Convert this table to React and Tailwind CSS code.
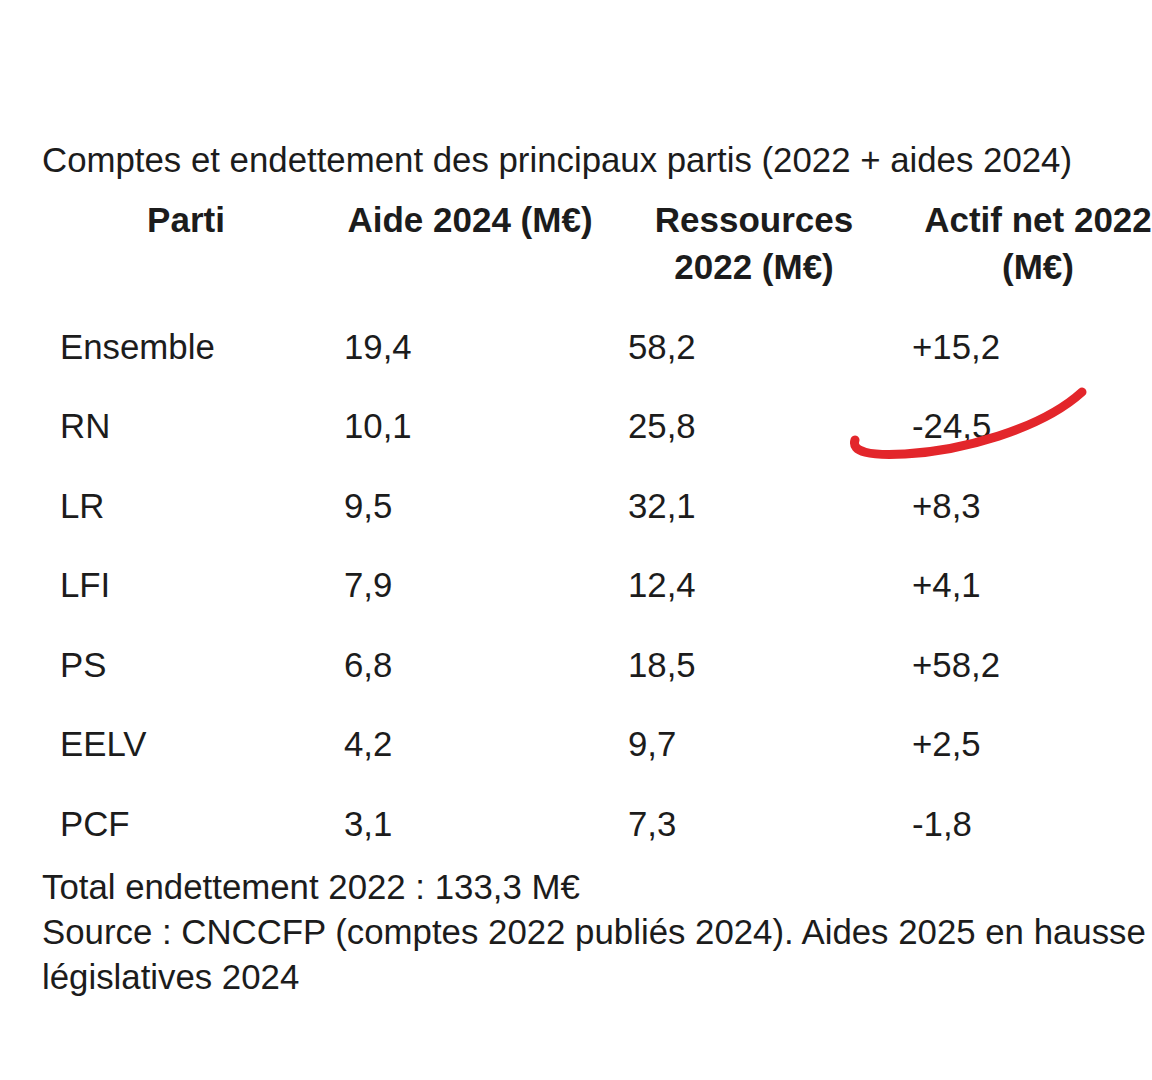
import React from 'react'

const ROWS = [
  ['Ensemble', '19,4', '58,2', '+15,2'],
  ['RN', '10,1', '25,8', '-24,5'],
  ['LR', '9,5', '32,1', '+8,3'],
  ['LFI', '7,9', '12,4', '+4,1'],
  ['PS', '6,8', '18,5', '+58,2'],
  ['EELV', '4,2', '9,7', '+2,5'],
  ['PCF', '3,1', '7,3', '-1,8'],
]

const COLS = 'grid grid-cols-[284px_284px_284px_284px]'

export default function App() {
  return (
    <div className="relative w-[1152px] h-[1080px] overflow-hidden bg-white text-[#1c1c1c] font-['Liberation_Sans',Arial,sans-serif]">
      <div className="w-[1400px] pl-[42px] pt-[140px]">
        <h1 className="text-[34.8px] leading-[40px] font-normal">
          Comptes et endettement des principaux partis (2022 + aides 2024)
        </h1>

        {/* header */}
        <div className={`${COLS} ml-[2px] mt-[16px] text-[35px] leading-[47px] font-bold text-center`}>
          <div>Parti</div>
          <div>Aide 2024 (M€)</div>
          <div>Ressources<br />2022 (M€)</div>
          <div>Actif net 2022<br />(M€)</div>
        </div>

        {/* rows */}
        <div className="ml-[2px] mt-[17px]">
          {ROWS.map((r) => (
            <div key={r[0]} className={`${COLS} h-[79.5px] items-center text-[34.8px]`}>
              {r.map((c, i) => (
                <div key={i} className="pl-[16px]">{c}</div>
              ))}
            </div>
          ))}
        </div>

        {/* footer */}
        <div className="text-[34.8px] leading-[45px]">
          <div>Total endettement 2022 : 133,3 M€</div>
          <div>Source : CNCCFP (comptes 2022 publiés 2024). Aides 2025 en hausse</div>
          <div>législatives 2024</div>
        </div>
      </div>

      {/* red hand-drawn underline */}
      <svg className="absolute left-0 top-0 pointer-events-none" width="1152" height="1080">
        <path
          d="M855 440 C851 452, 870 456, 905 454 C960 451, 1040 430, 1082 392"
          fill="none"
          stroke="#e3262b"
          strokeWidth="9"
          strokeLinecap="round"
        />
      </svg>
    </div>
  )
}
